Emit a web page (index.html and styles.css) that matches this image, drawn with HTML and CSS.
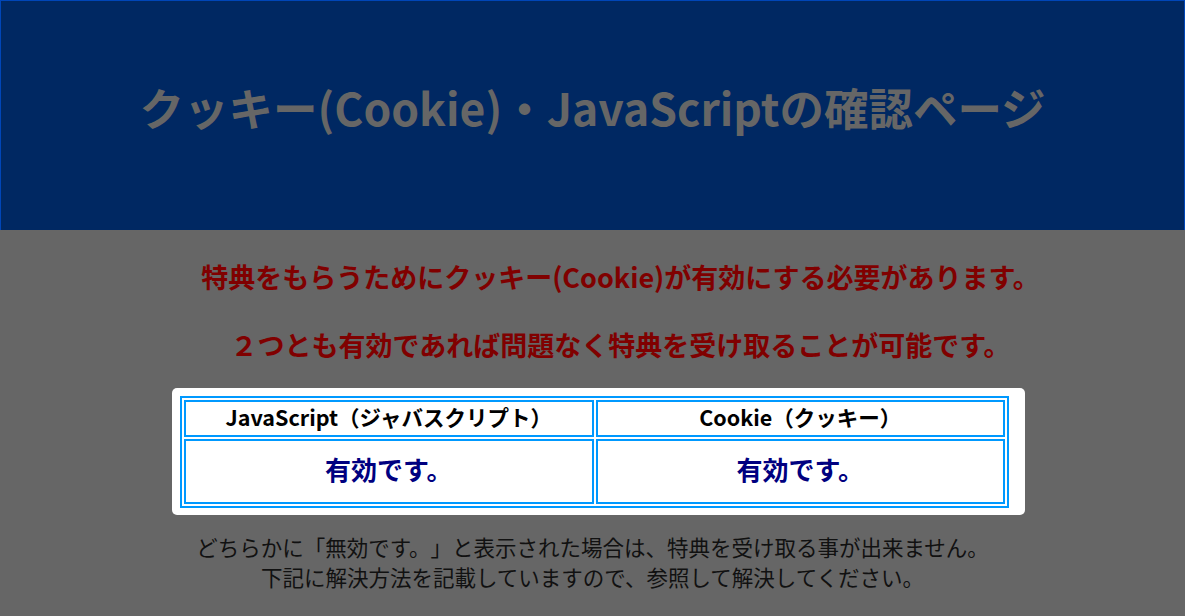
FILE: index.html
```html
<!DOCTYPE html>
<html lang="ja">
<head>
  <meta charset="utf-8">
  <title>クッキー(Cookie)・JavaScriptの確認ページ</title>
  <link rel="stylesheet" href="styles.css">
</head>
<body>
  <header class="top">
    <h1>クッキー(Cookie)・JavaScriptの確認ページ</h1>
  </header>

  <div class="main">
    <p class="notice">特典をもらうためにクッキー(Cookie)が有効にする必要があります。</p>
    <p class="notice">２つとも有効であれば問題なく特典を受け取ることが可能です。</p>

    <div class="check-box">
      <table class="check">
        <tr>
          <th>JavaScript（ジャバスクリプト）</th>
          <th>Cookie（クッキー）</th>
        </tr>
        <tr>
          <td id="js-status">有効です。</td>
          <td id="cookie-status">有効です。</td>
        </tr>
      </table>
    </div>

    <p class="help">どちらかに「無効です。」と表示された場合は、特典を受け取る事が出来ません。<br>下記に解決方法を記載していますので、参照して解決してください。</p>
  </div>
</body>
</html>
```

FILE: styles.css
```css
body {
  margin: 0;
  background-color: #666666;
  font-family: "Noto Sans CJK JP", "Noto Sans", sans-serif;
  color: #111111;
  text-spacing-trim: space-all;
}
.top {
  height: 229px;
  background-color: #002862;
  border: 1px solid #0046b8;
  border-bottom: none;
  display: flex;
  align-items: center;
  justify-content: center;
}
.top h1 {
  margin: 0 0 18px 0;
  font-size: 44.5px;
  font-weight: bold;
  color: #666666;
}
.main {
  padding-top: 28px;
}
.notice {
  margin: 0 0 30px 0;
  padding-left: 56px;
  text-align: center;
  font-size: 27px;
  font-weight: bold;
  line-height: 38px;
  color: #800000;
}
.notice + .notice {
  margin-bottom: 24px;
}
.check-box {
  margin: 0 160px 0 172px;
  padding: 8px 16px 7px 8px;
  background-color: #ffffff;
  border-radius: 5px;
}
.check {
  width: 100%;
  border: 2px solid #0099ff;
  border-spacing: 2px;
}
.check th,
.check td {
  border: 2px solid #0099ff;
  padding: 0;
  text-align: center;
  width: 50%;
}
.check th {
  height: 30px;
  padding-bottom: 3px;
  font-size: 21.5px;
  line-height: 28px;
  font-weight: bold;
  color: #000000;
}
.check td {
  height: 56px;
  padding-bottom: 5px;
  font-size: 26px;
  line-height: 34px;
  font-weight: bold;
  color: #000080;
}
.help {
  margin: 17px 0 0 0;
  text-align: center;
  font-size: 21.5px;
  line-height: 30px;
  color: #111111;
}
```
